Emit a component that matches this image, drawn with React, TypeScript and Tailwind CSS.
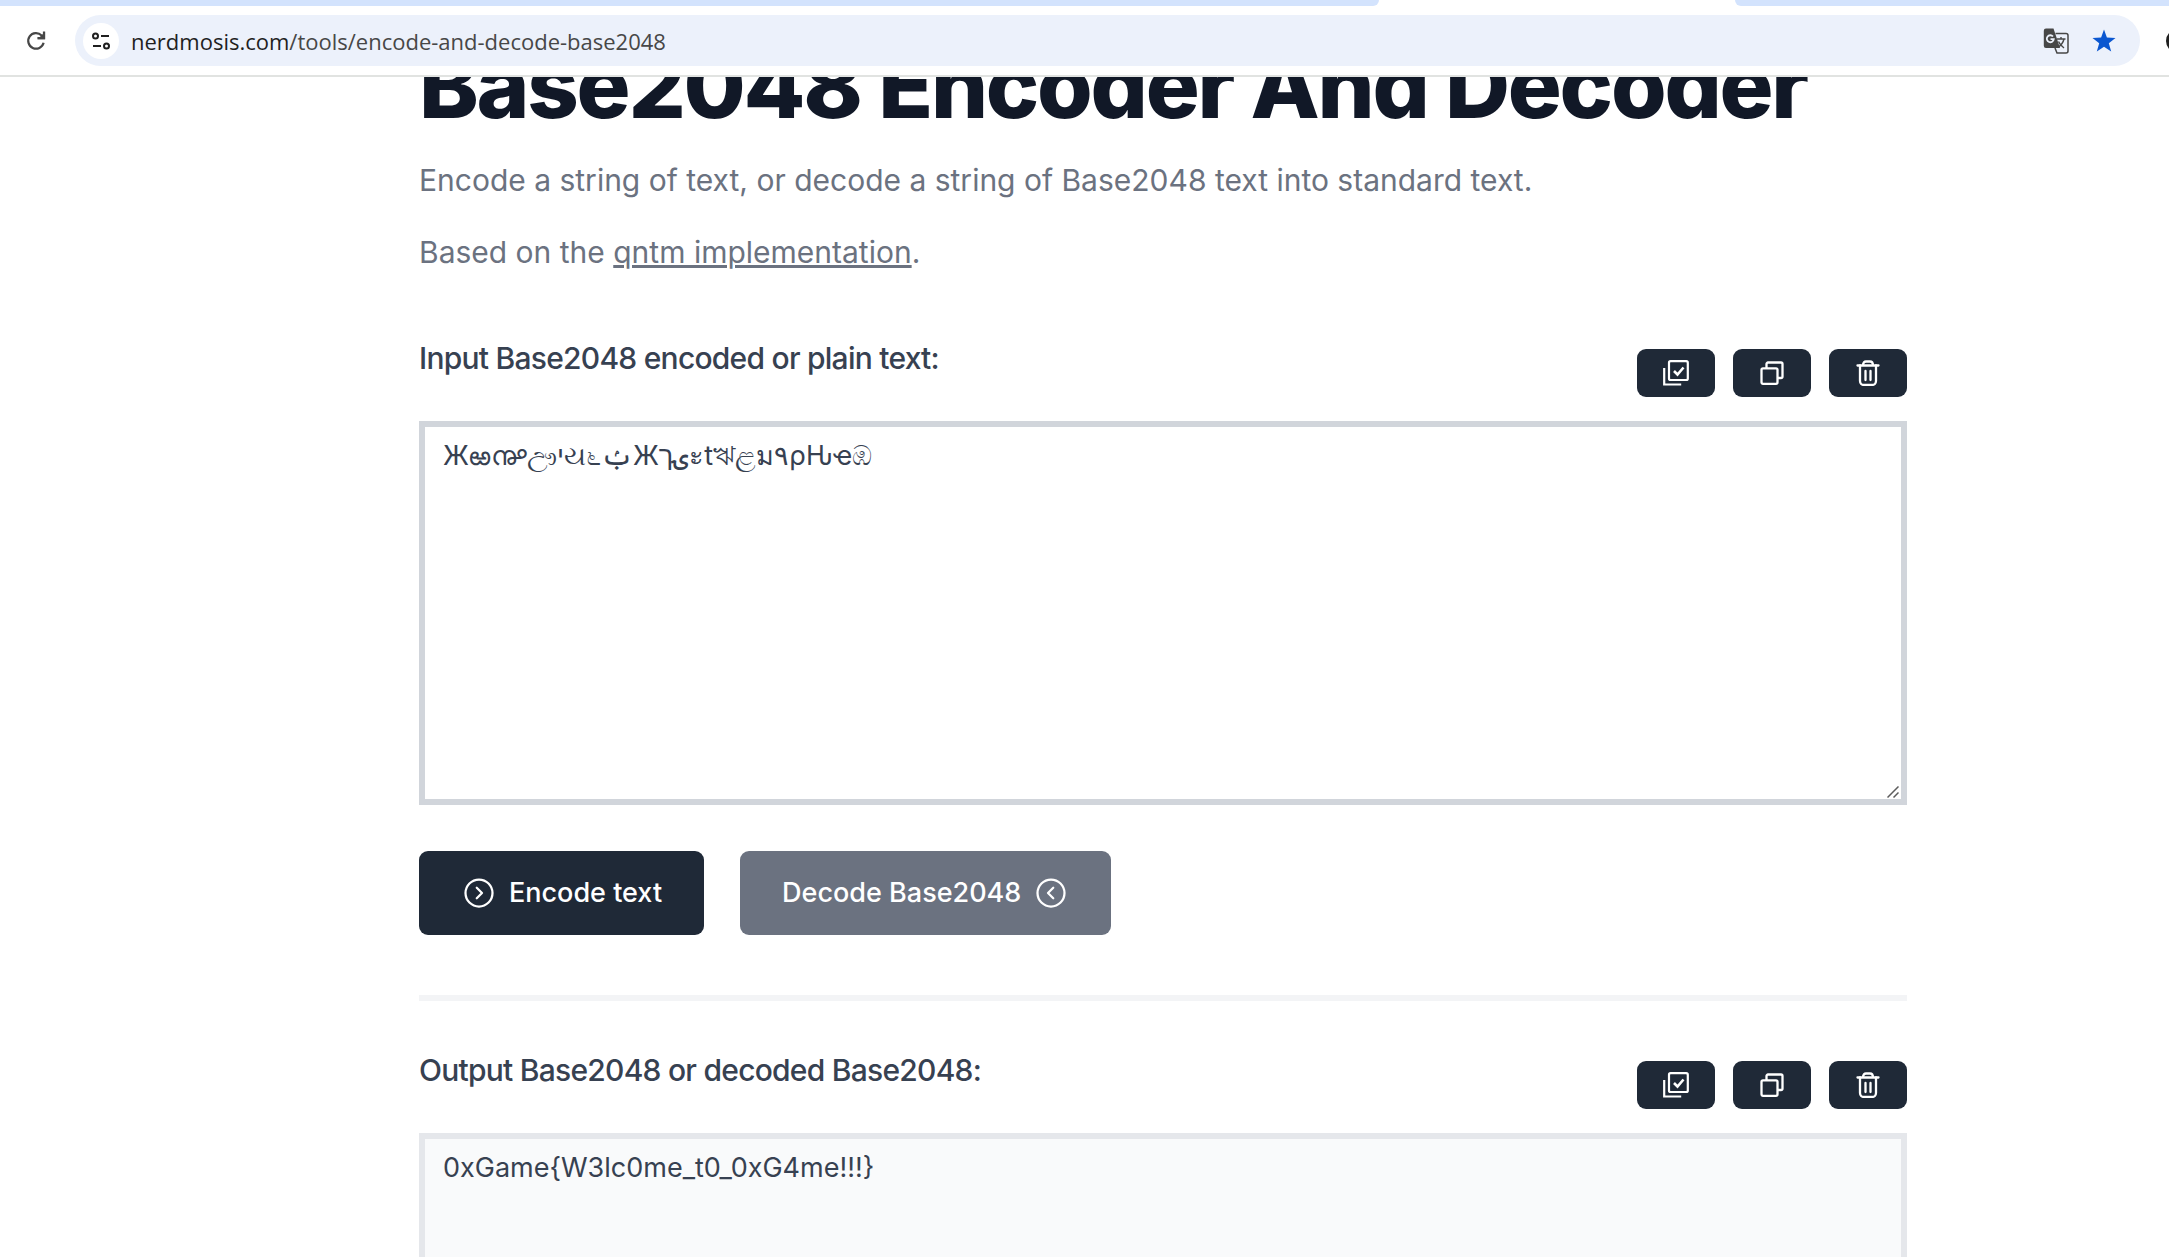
import { useState, type ReactNode } from "react";

const ENCODED =
  "\u0416\u0C31\u0D72\u0D8C\u05D9\u0AAF\u0CEC\u08B6\u0416\u06CD\u05DA\u0E30t\u098B\u0DC5\u0E21\u06F9\u03C1\u050A\u04BD\u0DB9";
const DECODED = "0xGame{W3lc0me_t0_0xG4me!!!}";

function Icon({ className, children }: { className: string; children: ReactNode }) {
  return (
    <svg
      viewBox="0 0 24 24"
      className={className}
      fill="none"
      stroke="currentColor"
      strokeLinecap="round"
      strokeLinejoin="round"
      aria-hidden="true"
    >
      {children}
    </svg>
  );
}

function BrowserBar() {
  return (
    <header className="shrink-0">
      <div className="flex h-[6px] justify-between bg-white">
        <div className="h-full w-[63.6%] rounded-br-[6px] bg-[#d3e3fd]" />
        <div className="h-full w-[20%] rounded-bl-[6px] bg-[#d3e3fd]" />
      </div>
      <div className="flex h-[71px] items-center overflow-hidden border-b-2 border-[#e1e3e1] bg-white pl-6">
        <button type="button" aria-label="Reload" className="mr-[27px] flex size-6 shrink-0 items-center justify-center text-[#474747]">
          <svg viewBox="0 0 24 24" className="size-6" fill="none" stroke="currentColor" strokeWidth="2.2" aria-hidden="true">
            <path d="M19.6 13.8A7.800 7.800 0 1 1 17.600 6.400L19.500 8.400" />
            <path d="M20 2.600v6.600h-6.600" />
            <path d="M20 5.500v3.700h-3.700z" fill="currentColor" />
          </svg>
        </button>
        <div className="flex h-[51px] min-w-0 flex-1 items-center rounded-full bg-[#ecf1fb] pr-6 pl-2">
          <button type="button" aria-label="View site information" className="flex size-9 shrink-0 items-center justify-center rounded-full bg-white text-[#1f1f1f]">
            <svg viewBox="0 0 20 20" className="size-5" fill="none" stroke="currentColor" strokeWidth="2" aria-hidden="true">
              <circle cx="4.500" cy="5" r="2.500" />
              <path d="M10 5h8M2 15h8" />
              <circle cx="15.500" cy="15" r="2.500" />
            </svg>
          </button>
          <a href="#top" className="ml-3 flex-1 font-['Open_Sans','Noto_Sans',sans-serif] text-[22px] leading-8 whitespace-nowrap text-[#474747]">
            <span className="text-[#1f1f1f]">nerdmosis.com</span>/tools/encode-and-decode-base2048
          </a>
          <button type="button" aria-label="Translate this page" className="mr-[23px] text-[#474747]">
            <svg viewBox="0 0 26 26" className="size-[26px]" aria-hidden="true">
              <path d="M3 0.5h7.500l6.500 19.500H3a2.200 2.200 0 0 1-2.200-2.200V2.700A2.200 2.200 0 0 1 3 .5z" fill="currentColor" />
              <path d="M12.500 5.500h10.500a2 2 0 0 1 2 2v15.500a2 2 0 0 1-2 2H14l-2-5" fill="none" stroke="currentColor" strokeWidth="1.500" />
              <path d="M10 8.500A3.500 3.500 0 1 0 10.800 11.200H7.500" fill="none" stroke="#ecf1fb" strokeWidth="1.800" />
              <path d="M14 11h8.500M18 9v2M21 11c-.8 3.500-2.600 6-6 8.500M15.500 13.500c1 2.500 2.800 4.500 5.500 6.500" fill="none" stroke="currentColor" strokeWidth="1.400" />
            </svg>
          </button>
          <button type="button" aria-label="Edit bookmark" className="text-[#0b57d0]">
            <svg viewBox="0 0 24 24" className="size-6" fill="currentColor" aria-hidden="true">
              <path d="M12 0.500l2.900 8.100 8.600.300-6.700 5.300 2.400 8.300L12 17.700l-7.200 4.800 2.400-8.300L.5 8.900l8.600-.3z" />
            </svg>
          </button>
        </div>
        <button type="button" aria-label="Extensions" className="-mr-[21px] ml-[26px] size-6 shrink-0 rounded-full border-[3px] border-[#1f1f1f]" />
      </div>
    </header>
  );
}

const toolClass =
  "flex h-12 w-[78px] items-center justify-center rounded-[9px] bg-[#1f2937] text-white hover:bg-gray-700";

function Tools({ onSelect, onClear, value }: { onSelect: () => void; onClear: () => void; value: string }) {
  return (
    <div className="flex gap-[18px] pt-3">
      <button type="button" aria-label="Select all" className={toolClass} onClick={onSelect}>
        <svg viewBox="0 0 26 26" className="size-[26px]" fill="none" stroke="currentColor" strokeWidth="2.200" aria-hidden="true">
          <rect x="6" y="1.200" width="18.800" height="18.800" rx="1.500" />
          <path d="M1.200 8v16.500h17" />
          <path d="M11 11l3.500 3.500L20.500 7.500" strokeWidth="2.600" />
        </svg>
      </button>
      <button
        type="button"
        aria-label="Copy"
        className={toolClass}
        onClick={() => navigator.clipboard?.writeText(value)}
      >
        <svg viewBox="0 0 24 24" className="size-6" fill="none" stroke="currentColor" strokeWidth="2.300" aria-hidden="true">
          <rect x="1.500" y="7.300" width="16" height="15.500" rx="1.500" />
          <path d="M6.500 7.300V3A1.500 1.500 0 0 1 8 1.500h13A1.500 1.500 0 0 1 22.500 3v12.500A1.500 1.500 0 0 1 21 17h-3.500" />
        </svg>
      </button>
      <button type="button" aria-label="Clear" className={toolClass} onClick={onClear}>
        <svg viewBox="0 0 26 26" className="size-[26px]" fill="none" stroke="currentColor" strokeWidth="2.300" strokeLinecap="round" aria-hidden="true">
          <path d="M2.500 5.500h21M8 5.500C8 2.500 9.500 1.500 11 1.500h4c1.500 0 3 1 3 4" />
          <path d="M5 5.500v15.500a4 4 0 0 0 4 4h8a4 4 0 0 0 4-4V5.500M10.500 11v9M15.500 11v9" />
        </svg>
      </button>
    </div>
  );
}

const fieldClass =
  "block h-96 w-full resize-none border-[6px] px-[18px] py-2 text-[27px] leading-[42px] text-[#374151] outline-none";
const labelClass = "text-[30px] leading-[42px] font-medium tracking-tight text-[#374151]";
const actionClass =
  "flex h-[84px] items-center gap-3 rounded-[9px] px-[42px] text-[27px] leading-9 font-medium text-white";

function selectField(id: string) {
  (document.getElementById(id) as HTMLTextAreaElement | null)?.select();
}

export default function App() {
  const [input, setInput] = useState(ENCODED);
  const [output, setOutput] = useState(DECODED);

  return (
    <div className="flex h-screen flex-col overflow-hidden bg-white font-[Inter,'Noto_Sans',sans-serif]">
      <BrowserBar />
      <main id="top" className="min-h-0 flex-1 overflow-hidden pr-[262px] pl-[419px]">
        <h1 className="-mt-[36px] text-[90px] leading-[90px] font-extrabold tracking-tight whitespace-nowrap text-[#111827]">
          Base2048 Encoder And Decoder
        </h1>
        <div className="mt-7 space-y-[30px] text-[30px] leading-[42px] text-[#6b7280]">
          <p>Encode a string of text, or decode a string of Base2048 text into standard text.</p>
          <p>
            Based on the{" "}
            <a href="#qntm" className="underline">
              qntm implementation
            </a>
            .
          </p>
        </div>

        <section className="mt-16">
          <div className="mb-6 flex justify-between">
            <label htmlFor="input" className={labelClass}>
              Input Base2048 encoded or plain text:
            </label>
            <Tools value={input} onSelect={() => selectField("input")} onClear={() => setInput("")} />
          </div>
          <div className="relative">
            <textarea
              id="input"
              spellCheck={false}
              value={input}
              onChange={(e) => setInput(e.target.value)}
              className={`${fieldClass} border-[#d1d5db] bg-white`}
            />
            <svg
              viewBox="0 0 12 12"
              className="pointer-events-none absolute right-2 bottom-[7px] size-3"
              fill="none"
              stroke="#5c5c5c"
              strokeWidth="1.500"
              aria-hidden="true"
            >
              <path d="M0.500 11.500l11-11M6.500 11.500l5-5" />
            </svg>
          </div>
        </section>

        <div className="mt-[46px] flex gap-9">
          <button type="button" className={`${actionClass} bg-[#1f2937]`}>
            <Icon className="size-9">
              <circle cx="12" cy="12" r="9" strokeWidth="1.500" />
              <path d="M10.500 8.500L14 12l-3.500 3.500" strokeWidth="1.500" />
            </Icon>
            Encode text
          </button>
          <button type="button" className={`${actionClass} bg-[#6b7280]`}>
            Decode Base2048
            <Icon className="size-9">
              <circle cx="12" cy="12" r="9" strokeWidth="1.500" />
              <path d="M13.500 8.500L10 12l3.500 3.500" strokeWidth="1.500" />
            </Icon>
          </button>
        </div>

        <hr className="mt-[60px] mb-12 border-t-[6px] border-[#f3f4f6]" />

        <section>
          <div className="mb-6 flex justify-between">
            <label htmlFor="output" className={labelClass}>
              Output Base2048 or decoded Base2048:
            </label>
            <Tools value={output} onSelect={() => selectField("output")} onClear={() => setOutput("")} />
          </div>
          <textarea
            id="output"
            readOnly
            spellCheck={false}
            value={output}
            className={`${fieldClass} border-[#e5e7eb] bg-[#f9fafb]`}
          />
        </section>
      </main>
    </div>
  );
}
